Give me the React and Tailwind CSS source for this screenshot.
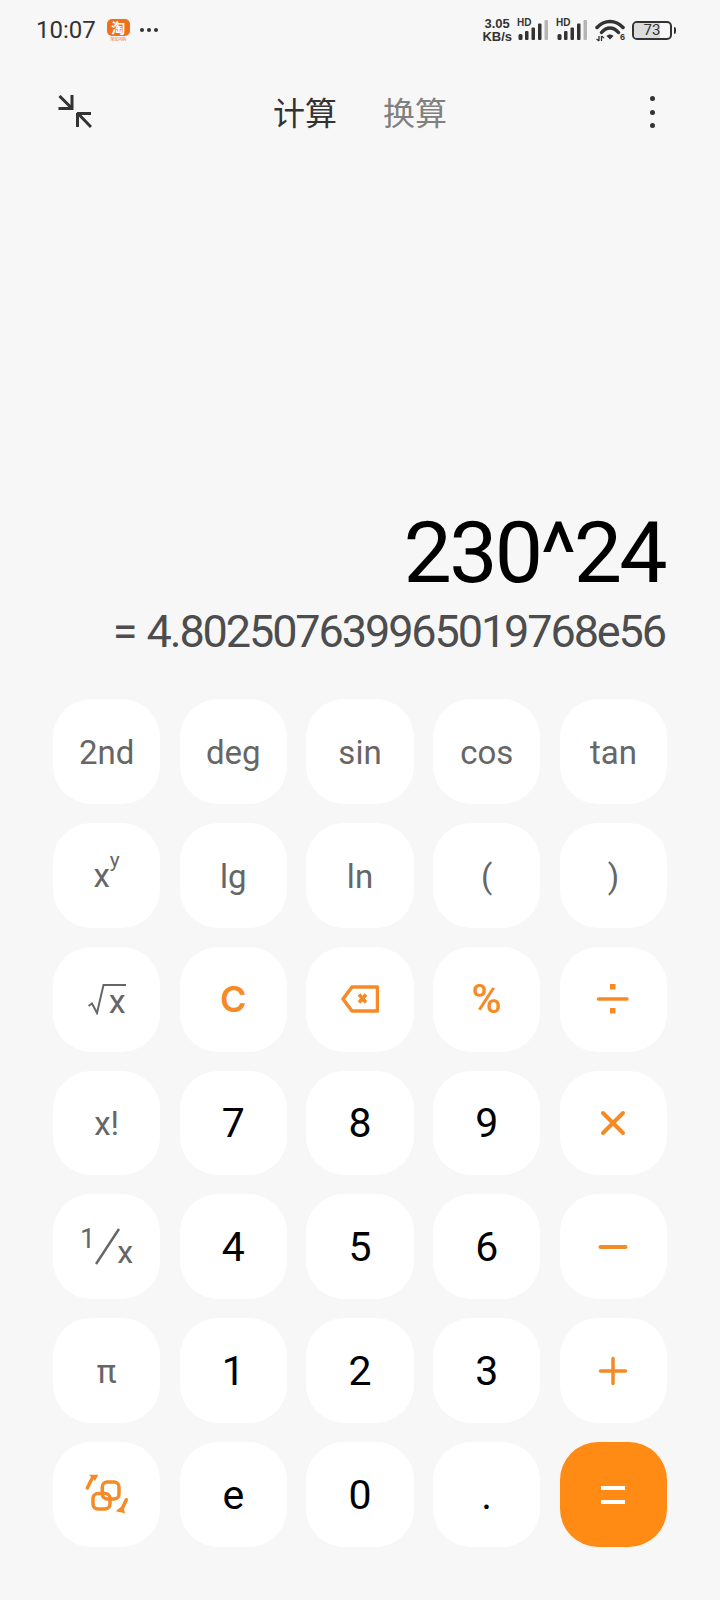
const sans = "font-['Roboto','Noto_Sans_CJK_SC',sans-serif]";

function SignalIcon() {
  return (
    <div className="relative w-[31px] h-[22px]">
      <span className="absolute -left-[1px] -top-[1px] font-['Liberation_Sans',sans-serif] font-bold text-[10px] leading-[10px] text-[#333]">HD</span>
      <svg width="31" height="22" viewBox="0 0 31 22" className="absolute inset-0">
        <rect x="0.5" y="15" width="4" height="6" rx="1.5" fill="#333" />
        <rect x="7" y="12" width="3.5" height="9" rx="1" fill="#333" />
        <rect x="13.5" y="8.5" width="3.5" height="12.5" rx="1" fill="#333" />
        <rect x="20" y="4.5" width="3.5" height="16.5" rx="1" fill="#333" />
        <rect x="26.5" y="1" width="3.5" height="20" rx="1" fill="#b5b5b5" />
      </svg>
    </div>
  );
}

function WifiIcon() {
  return (
    <div className="relative w-[30px] h-[23px]">
      <svg width="30" height="23" viewBox="0 0 30 23" className="absolute inset-0">
        <path d="M2 8.5 C9.5 0.5 20.5 0.5 28 8.5" fill="none" stroke="#333" strokeWidth="3.5" strokeLinecap="round" />
        <path d="M6.5 13.5 C11.5 7.5 18.5 7.5 23.5 13.5" fill="none" stroke="#333" strokeWidth="3.5" strokeLinecap="round" />
        <path d="M11.5 17 C13.5 15 16.5 15 18.5 17 L15 20.5 Z" fill="#333" />
        <path d="M4 17 V22 M6.5 22 V17 M1.5 20 L4 22 M9 19 L6.5 17" stroke="#333" strokeWidth="1.3" fill="none" />
      </svg>
      <span className="absolute right-0 bottom-0 font-['Liberation_Sans',sans-serif] font-bold text-[9px] leading-[9px] text-[#333]">6</span>
    </div>
  );
}

function Battery() {
  return (
    <div className="flex items-center gap-[2px]">
      <div className="relative w-[40px] h-[19px] border-2 border-[#333] rounded-[5px] overflow-hidden">
        <div className="absolute left-0 top-0 bottom-0 w-[26px] bg-[#dcdcdc]" />
        <span className={`absolute inset-0 flex items-center justify-center text-[15px] leading-none text-[#333] ${sans}`}>73</span>
      </div>
      <div className="w-[2px] h-[7px] bg-[#333] rounded-r-sm" />
    </div>
  );
}

function StatusBar() {
  return (
    <div className="h-[60px] pl-[36px] pr-[44px] flex items-center justify-between">
      <div className="flex items-center">
        <span className={`text-[24px] leading-none text-[#333] ${sans}`}>10:07</span>
        <div className="ml-[11px] w-[23px] h-[23px] flex flex-col items-center">
          <div className="w-[23px] h-[17px] rounded-[5px] bg-[#f0701a] flex items-center justify-center text-white text-[14px] font-bold leading-none font-['Noto_Sans_CJK_SC',sans-serif]">淘</div>
          <span className="text-[4px] leading-[6px] text-[#f0701a] font-['Noto_Sans_CJK_SC',sans-serif]">淘宝闪购</span>
        </div>
        <div className="ml-[10px] flex gap-[3px]">
          <div className="w-[4px] h-[4px] rounded-full bg-[#333]" />
          <div className="w-[4px] h-[4px] rounded-full bg-[#333]" />
          <div className="w-[4px] h-[4px] rounded-full bg-[#333]" />
        </div>
      </div>
      <div className="flex items-center">
        <div className="font-['Liberation_Sans',sans-serif] font-bold text-[13px] leading-[13px] text-[#333] text-center">3.05<br />KB/s</div>
        <div className="ml-[6px]"><SignalIcon /></div>
        <div className="ml-[8px]"><SignalIcon /></div>
        <div className="ml-[7px]"><WifiIcon /></div>
        <div className="ml-[7px]"><Battery /></div>
      </div>
    </div>
  );
}

function Header() {
  return (
    <div className="h-[104px] pl-[58px] pr-[65px] flex items-center justify-between">
      <svg width="34" height="34" viewBox="0 0 34 34" fill="none" stroke="#333" strokeWidth="3">
        <path d="M1.5 1 L14 13.5 M0.5 13.5 H15 M14 0 V15" />
        <path d="M19.5 18 L33 32 M19 18.5 H33 M19.5 18 V32" />
      </svg>
      <div className="mr-[22px] -mt-[3px] flex gap-[46px] text-[32px] leading-none font-['Noto_Sans_CJK_SC',sans-serif]">
        <span className="text-[#333]">计算</span>
        <span className="text-[#808080]">换算</span>
      </div>
      <div className="flex flex-col gap-[8.5px]">
        <div className="w-[5px] h-[5px] rounded-full bg-[#333]" />
        <div className="w-[5px] h-[5px] rounded-full bg-[#333]" />
        <div className="w-[5px] h-[5px] rounded-full bg-[#333]" />
      </div>
    </div>
  );
}

function Op({ children, size = 36, sw = 3.5 }) {
  return (
    <svg width={size} height={size} viewBox="0 0 36 36" fill="none" stroke="#f58a26" strokeWidth={sw} strokeLinecap="round">
      {children}
    </svg>
  );
}

const keys = [
  { t: "2nd" }, { t: "deg" }, { t: "sin" }, { t: "cos" }, { t: "tan" },
  { n: "pow" }, { t: "lg" }, { t: "ln" }, { t: "(" }, { t: ")" },
  { n: "sqrt" }, { n: "c" }, { n: "back" }, { n: "pct" }, { n: "div" },
  { t: "x!" }, { d: "7" }, { d: "8" }, { d: "9" }, { n: "mul" },
  { n: "inv" }, { d: "4" }, { d: "5" }, { d: "6" }, { n: "sub" },
  { t: "π" }, { d: "1" }, { d: "2" }, { d: "3" }, { n: "add" },
  { n: "swap" }, { d: "e" }, { d: "0" }, { d: "." }, { n: "eq" },
];

function KeyFace({ k }) {
  if (k.t) return <span className="pt-[2px] text-[#666] text-[33px] leading-none">{k.t}</span>;
  if (k.d) return <span className="pt-[2px] text-black text-[41px] leading-none">{k.d}</span>;
  switch (k.n) {
    case "pow":
      return <span className="text-[#666] text-[33px] leading-none">x<sup className="text-[21px] leading-none align-[9px]">y</sup></span>;
    case "sqrt":
      return (
        <span className="relative block w-[38px] h-[31px]">
          <svg width="38" height="31" viewBox="0 0 38 31" fill="none" stroke="#666" strokeWidth="2">
            <path d="M0.5 22 L4 19.5 L9 29 L15.5 1 H38" />
          </svg>
          <span className="absolute right-0 bottom-0 text-[#666] text-[34px] leading-[28px]">x</span>
        </span>
      );
    case "c":
      return <span className="text-[#f58a26] text-[36px] leading-none font-semibold font-['Inter',sans-serif]">C</span>;
    case "back":
      return (
        <svg width="38" height="28" viewBox="0 0 38 28" fill="none" stroke="#f58a26" strokeWidth="3.5" strokeLinejoin="round">
          <path d="M2 14 L11 2 H36.5 V26 H11 Z" />
          <path d="M18 9.5 L25 17.5 M25 9.5 L18 17.5" />
        </svg>
      );
    case "pct":
      return <span className="text-[#f58a26] text-[41px] leading-none font-medium">%</span>;
    case "div":
      return (
        <Op>
          <path d="M3.5 18 H32" />
          <rect x="15" y="3" width="5.5" height="5.5" fill="#f58a26" stroke="none" />
          <rect x="15" y="27" width="5.5" height="5.5" fill="#f58a26" stroke="none" />
        </Op>
      );
    case "mul":
      return <Op sw={4}><path d="M8 8 L28 28 M28 8 L8 28" /></Op>;
    case "sub":
      return <Op sw={4}><path d="M5.5 18 H30.5" /></Op>;
    case "add":
      return <Op sw={3.5}><path d="M5.5 18 H30.5 M18 5.5 V30.5" /></Op>;
    case "eq":
      return (
        <svg width="26" height="20" viewBox="0 0 26 20" fill="none" stroke="#fff" strokeWidth="4">
          <path d="M1 3 H25 M1 17 H25" />
        </svg>
      );
    case "inv":
      return (
        <span className="flex items-end text-[#666] leading-none">
          <span className="text-[27px] self-start -mt-[2px]">1</span>
          <svg width="25" height="37" viewBox="0 0 25 37" fill="none" stroke="#666" strokeWidth="2.5">
            <path d="M1 36 L24 1" />
          </svg>
          <span className="-ml-[3px] text-[32px] leading-[26px]">x</span>
        </span>
      );
    case "swap":
      return (
        <svg width="46" height="42" viewBox="0 0 46 42" fill="none" stroke="#f58a26" strokeWidth="3.5">
          <rect x="9" y="19.5" width="17" height="15.5" rx="5" />
          <rect x="18.3" y="8" width="16.7" height="17" rx="5" />
          <path d="M3.3 14 L8.3 4" strokeLinecap="round" />
          <path d="M5 0.7 L14.3 0.7 L11 7 Z" fill="#f58a26" stroke="none" />
          <path d="M42.3 25.7 L37.7 35.7" strokeLinecap="round" />
          <path d="M31.7 37.3 L41 39.3 L39 31.3 Z" fill="#f58a26" stroke="none" />
        </svg>
      );
    default:
      return null;
  }
}

function Keypad() {
  return (
    <div className="grid grid-cols-5 grid-rows-7 h-[848px] gap-x-[19.5px] gap-y-[19px]">
      {keys.map((k, i) => (
        <button
          key={i}
          className={`flex items-center justify-center rounded-[38px] ${k.n === "eq" ? "bg-[#ff8a14]" : "bg-white"}`}
        >
          <KeyFace k={k} />
        </button>
      ))}
    </div>
  );
}

export default function App() {
  return (
    <div className={`h-[1600px] bg-[#f7f7f7] flex flex-col overflow-hidden ${sans}`}>
      <StatusBar />
      <Header />
      <div className="flex-1" />
      <div className="pl-[53px] pr-[55px] text-right whitespace-nowrap">
        <div className="text-black text-[86px] leading-[104px] tracking-[-2.7px]">230^24</div>
        <div className="text-[#4d4d4d] text-[45px] leading-[56px] -mt-[1px] tracking-[-2.1px] [word-spacing:2px]">= 4.802507639965019768e56</div>
      </div>
      <div className="px-[53px] pb-[53px] mt-[39px]">
        <Keypad />
      </div>
    </div>
  );
}
